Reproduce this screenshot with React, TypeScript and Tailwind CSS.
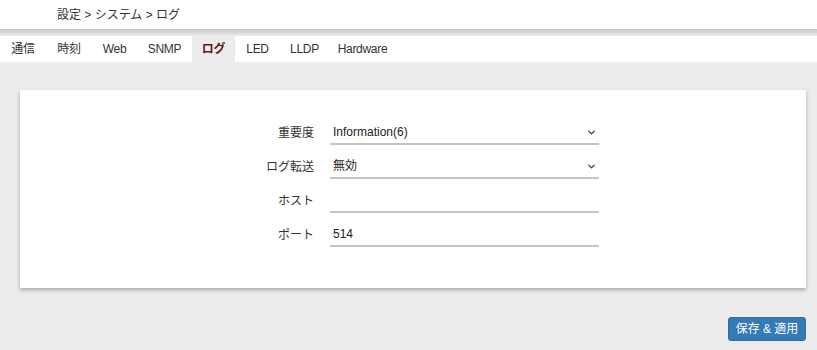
import React, { useState } from "react";
import { ChevronDown } from "lucide-react";

const TABS = [
  { name: "通信", w: "w-[46px]" },
  { name: "時刻", w: "w-[46px]" },
  { name: "Web", w: "w-[45px]" },
  { name: "SNMP", w: "w-[55px]" },
  { name: "ログ", w: "w-[43px]" },
  { name: "LED", w: "w-[45px]" },
  { name: "LLDP", w: "w-[49px]" },
  { name: "Hardware", w: "w-[67px]" },
];

function Row({ label, children }: any) {
  return (
    <div className="flex items-center justify-center gap-4">
      <div className="w-[87px] text-right text-[12px] text-[#333]">{label}</div>
      <div className="flex h-[24px] w-[269px] items-center border-b-2 border-[#c4c4c4] pl-[3px] pr-[2px] text-[12px] text-[#222]">
        {children}
      </div>
    </div>
  );
}

function Select({ value }: any) {
  return (
    <>
      <span className="flex-1">{value}</span>
      <ChevronDown size={11} strokeWidth={2.6} className="text-[#333]" />
    </>
  );
}

export default function App() {
  const [active, setActive] = useState("ログ");

  return (
    <div className="min-h-[350px] bg-[#ececec] font-['Liberation_Sans','Noto_Sans_CJK_JP',sans-serif]">
      <div className="flex h-[29px] items-center bg-white pl-[57px] text-[12px] text-[#333]">
        設定 &gt; システム &gt; ログ
      </div>
      <div className="h-[7px] bg-gradient-to-b from-[#c6c6c6] to-[#ececec]" />

      <div className="flex h-[26px] bg-white">
        {TABS.map((t) => (
          <button
            key={t.name}
            onClick={() => setActive(t.name)}
            className={`flex items-center justify-center text-[12px] tracking-[-0.3px] ${t.w} ${
              active === t.name
                ? "bg-[#ececec] font-bold text-[#5c1a1a]"
                : "bg-white text-[#333]"
            }`}
          >
            {t.name}
          </button>
        ))}
      </div>

      <div className="mt-[28px] mr-[11px] ml-[20px] flex flex-col gap-[10px] bg-white pt-[31px] pb-[41px] shadow-[0_2px_4px_rgba(0,0,0,0.3)]">
        <Row label="重要度">
          <Select value="Information(6)" />
        </Row>
        <Row label="ログ転送">
          <Select value="無効" />
        </Row>
        <Row label="ホスト">{""}</Row>
        <Row label="ポート">514</Row>
      </div>

      <div className="mt-[29px] flex justify-end pr-[11px]">
        <button className="h-[24px] w-[78px] rounded-[3px] border border-[#2e6da4] bg-[#337ab7] text-[12px] text-white">
          保存 &amp; 適用
        </button>
      </div>
    </div>
  );
}
